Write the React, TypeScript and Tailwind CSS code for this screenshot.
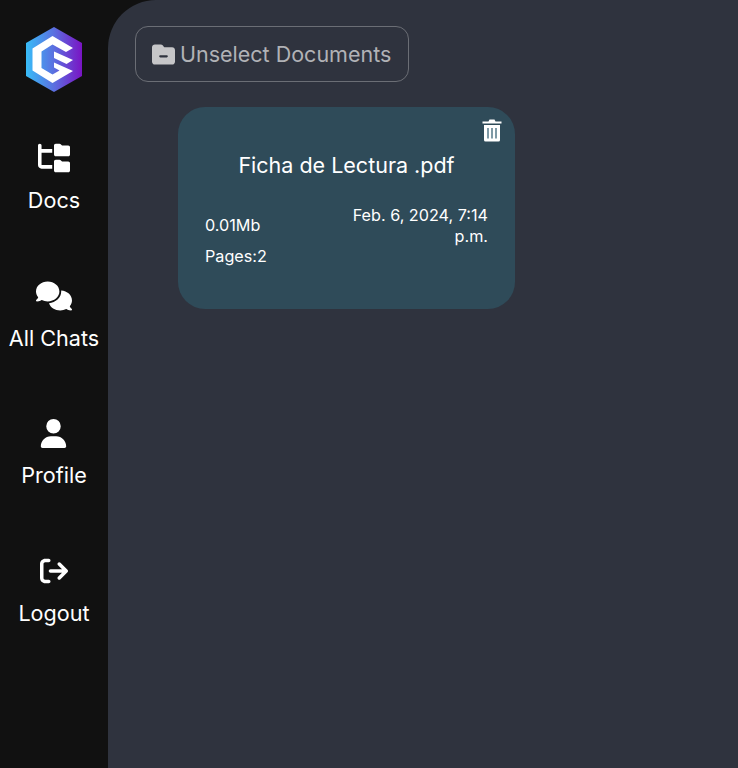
import React from 'react';
import {
  FaFolderTree,
  FaComments,
  FaUser,
  FaArrowRightFromBracket,
  FaFolderMinus,
} from 'react-icons/fa6';

const navItems = [
  { label: 'Docs', icon: FaFolderTree, size: 'text-[32px]' },
  { label: 'All Chats', icon: FaComments, size: 'text-[36px]' },
  { label: 'Profile', icon: FaUser, size: 'text-[29px]' },
  { label: 'Logout', icon: FaArrowRightFromBracket, size: 'text-[28px]' },
];

const Logo = () => (
  <svg width="58" height="66" viewBox="0 0 58 66">
    <defs>
      <linearGradient id="hex" x1="0" y1="0" x2="1" y2="0">
        <stop offset="0" stopColor="#38bdf8" />
        <stop offset="0.5" stopColor="#5b6fe0" />
        <stop offset="1" stopColor="#7a14c4" />
      </linearGradient>
    </defs>
    <polygon points="29,0 57,16 57,49 29,65 1,49 1,16" fill="url(#hex)" />
    {/* C with the lower arm */}
    <polygon
      points="27.5,9 48,21 41,25 27.5,17.5 16.5,24.5 16.5,41 27.5,47.5 34.5,43.5 29,40.5 29,35.5 48,44 27.5,56 7.5,43.5 7.5,21.5"
      fill="#fff"
    />
    {/* middle stripe */}
    <polygon points="29,24.5 48,33 41.5,37 29,31" fill="#fff" />
  </svg>
);

// trash can with three light slots, as in the card corner
const TrashIcon = () => (
  <svg width="20" height="23" viewBox="0 0 20 23" className="absolute right-[13px] top-[12px]">
    <path d="M0.5 2.5H6.5L7.5 0.5H12.5L13.5 2.5H19.5V4.5H0.5Z" fill="#fff" />
    <path d="M2 6H18V21A1.5 1.5 0 0 1 16.5 22.5H3.5A1.5 1.5 0 0 1 2 21Z" fill="#fff" />
    <rect x="5" y="9" width="2" height="10.5" fill="#7f9aa6" />
    <rect x="9" y="9" width="2" height="10.5" fill="#7f9aa6" />
    <rect x="13" y="9" width="2" height="10.5" fill="#7f9aa6" />
  </svg>
);

export default function App() {
  return (
    <div className="flex h-[768px] w-[738px] overflow-hidden bg-[#111111] font-['Inter',sans-serif] text-white">
      {/* sidebar */}
      <aside className="flex w-[108px] shrink-0 flex-col items-center pt-[27px]">
        <Logo />
        <nav className="mt-[49px] flex flex-col items-center gap-[57.5px]">
          {navItems.map(({ label, icon: Icon, size }) => (
            <div key={label} className="flex h-[80px] flex-col items-center">
              <div className="flex h-[32px] items-center">
                <Icon className={size} />
              </div>
              <span className="mt-[10px] text-[21.6px] leading-[32px]">{label}</span>
            </div>
          ))}
        </nav>
      </aside>

      {/* main */}
      <main className="flex-1 rounded-tl-[48px] bg-[#2f333e] pl-[27px] pt-[26px]">
        <button className="flex h-[56px] w-[274px] items-center gap-[5px] rounded-[13px] border border-[#6b6e75] pl-[16px] text-[21.5px] text-[#b1b2b6]">
          <FaFolderMinus className="text-[23px] text-[#c6c6c8]" />
          Unselect Documents
        </button>

        <div className="relative ml-[43px] mt-[25px] h-[202px] w-[336.5px] rounded-[27px] bg-[#2f4b59] pl-[27px] pr-[26.5px] pt-[42px]">
          <TrashIcon />
          <h3 className="text-center text-[21.5px] leading-[32px]">Ficha de Lectura .pdf</h3>
          <div className="mt-[24px] flex justify-between text-[16.2px]">
            <div className="pt-[8px]">
              <p className="leading-[24px]">0.01Mb</p>
              <p className="mt-[7px] leading-[24px]">Pages:2</p>
            </div>
            <p className="w-[140px] text-right leading-[21px]">Feb. 6, 2024, 7:14 p.m.</p>
          </div>
        </div>
      </main>
    </div>
  );
}
